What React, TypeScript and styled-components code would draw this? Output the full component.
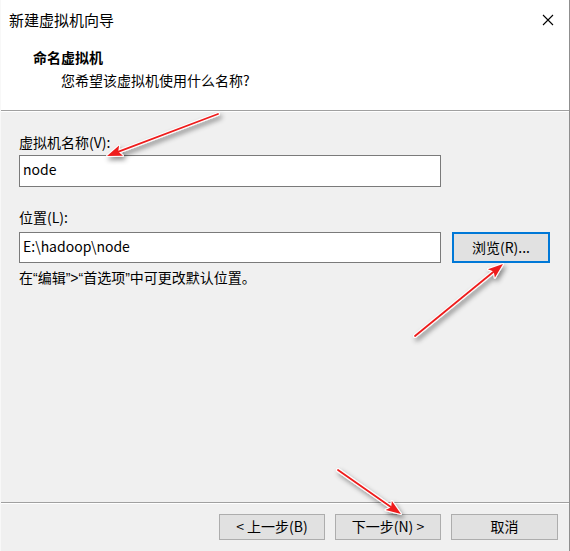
import styled, { createGlobalStyle } from "styled-components";

const GlobalStyle = createGlobalStyle`
  html, body {
    margin: 0;
    padding: 0;
    background: #f0f0f0;
  }
  body {
    font-family: "Noto Sans CJK SC", "Noto Sans", sans-serif;
    color: #000;
  }
  * {
    box-sizing: border-box;
  }
`;

interface IArrow {
  x1: number;
  y1: number;
  x2: number;
  y2: number;
}

const arrows: IArrow[] = [
  { x1: 218, y1: 114, x2: 107, y2: 156 },
  { x1: 415, y1: 336, x2: 503, y2: 264 },
  { x1: 338, y1: 470, x2: 401, y2: 514 },
];

// 화살표 모양 계산
const arrowShape = ({ x1, y1, x2, y2 }: IArrow) => {
  const len = Math.hypot(x2 - x1, y2 - y1);
  const ux = (x2 - x1) / len;
  const uy = (y2 - y1) / len;
  const head = 15;
  const half = 5.5;
  const bx = x2 - ux * head;
  const by = y2 - uy * head;
  const pts = [
    `${x2},${y2}`,
    `${bx - uy * half},${by + ux * half}`,
    `${bx + ux * 3},${by + uy * 3}`,
    `${bx + uy * half},${by - ux * half}`,
  ].join(" ");
  return { bx: bx + ux * 4, by: by + uy * 4, pts };
};

const App = () => {
  return (
    <>
      <GlobalStyle />
      <Window>
        <Header>
          <TitleBar>
            <WindowTitle>新建虚拟机向导</WindowTitle>
            <CloseBtn>
              <svg width="12" height="12" viewBox="0 0 12 12">
                <path d="M1 1 L11 11 M11 1 L1 11" stroke="#000" strokeWidth="1.1" />
              </svg>
            </CloseBtn>
          </TitleBar>
          <HeaderBody>
            <StepTitle>命名虚拟机</StepTitle>
            <StepDesc>您希望该虚拟机使用什么名称?</StepDesc>
          </HeaderBody>
        </Header>

        <Content>
          <Label>虚拟机名称(V):</Label>
          <TextBox $width={422} $height={32}>node</TextBox>
          <Label $top={20}>位置(L):</Label>
          <Row>
            <TextBox $width={422} $height={31}>E:\hadoop\node</TextBox>
            <Button $focused $width={98} $height={31}>
              浏览(R)...
            </Button>
          </Row>
          <Hint>
            在<Quote>“</Quote>编辑<Quote>”&gt;“</Quote>首选项<Quote>”</Quote>
            中可更改默认位置。
          </Hint>
        </Content>

        <Footer>
          <Button $width={106} $height={26}>&lt; 上一步(B)</Button>
          <Button $width={106} $height={26}>下一步(N) &gt;</Button>
          <Button $width={107} $height={26}>
            取消
          </Button>
        </Footer>

        <Overlay width="570" height="551" viewBox="0 0 570 551">
          <defs>
            <filter id="shadow" x="-20%" y="-20%" width="140%" height="140%">
              <feDropShadow dx="2" dy="3" stdDeviation="2.5" floodColor="#000" floodOpacity="0.45" />
            </filter>
          </defs>
          {arrows.map((a, i) => {
            const { bx, by, pts } = arrowShape(a);
            return (
              <g key={i} filter="url(#shadow)">
                <line x1={a.x1} y1={a.y1} x2={bx} y2={by} stroke="#fff" strokeWidth="4" strokeLinecap="round" />
                <polygon points={pts} fill="#fff" stroke="#fff" strokeWidth="2" strokeLinejoin="round" />
                <line x1={a.x1} y1={a.y1} x2={bx} y2={by} stroke="#ee1c1c" strokeWidth="1.8" strokeLinecap="round" />
                <polygon points={pts} fill="#ee1c1c" />
              </g>
            );
          })}
        </Overlay>
      </Window>
    </>
  );
};
export default App;

const Window = styled.div`
  position: relative;
  width: 570px;
  height: 551px;
  display: flex;
  flex-direction: column;
  background: #f0f0f0;
  border-left: 1px solid #f8f8f8;
  border-right: 1px solid #8f8f8f;
  overflow: hidden;
`;

const Header = styled.div`
  background: #fff;
  border-bottom: 1px solid #a0a0a0;
  box-shadow: 0 1px 0 #fff;
  height: 111px;
`;

const TitleBar = styled.div`
  height: 40px;
  display: flex;
  align-items: center;
  justify-content: space-between;
  padding-left: 8px;
  padding-right: 15px;
`;

const WindowTitle = styled.span`
  font-size: 15px;
  line-height: 20px;
  color: #000;
`;

const CloseBtn = styled.div`
  width: 12px;
  height: 12px;
  display: flex;
`;

const HeaderBody = styled.div`
  padding: 7px 0 0 32px;
  display: flex;
  flex-direction: column;
  gap: 3px;
`;

const StepTitle = styled.div`
  font-size: 14px;
  font-weight: 700;
  line-height: 20px;
`;

const StepDesc = styled.div`
  font-size: 14px;
  line-height: 20px;
  padding-left: 28px;
`;

const Content = styled.div`
  flex: 1;
  padding: 21px 0 0 18px;
  display: flex;
  flex-direction: column;
`;

const Label = styled.div<{ $top?: number }>`
  font-size: 14px;
  line-height: 20px;
  margin-top: ${({ $top }) => $top ?? 0}px;
  margin-bottom: 3px;
`;

const TextBox = styled.div<{ $width: number; $height: number }>`
  width: ${({ $width }) => $width}px;
  height: ${({ $height }) => $height}px;
  background: #fff;
  border: 1px solid #7a7a7a;
  font-size: 14px;
  display: flex;
  align-items: center;
  padding-left: 3px;
  padding-bottom: 4px;
`;

const Row = styled.div`
  display: flex;
  gap: 11px;
  margin-top: 2px;
`;

const Button = styled.div<{
  $width: number;
  $height: number;
  $focused?: boolean;
}>`
  width: ${({ $width }) => $width}px;
  height: ${({ $height }) => $height}px;
  background: #e1e1e1;
  border: ${({ $focused }) => ($focused ? "2px solid #0078d7" : "1px solid #adadad")};
  font-size: 14px;
  display: flex;
  align-items: center;
  justify-content: center;
  padding-bottom: 2px;
`;

const Hint = styled.div`
  font-size: 14px;
  line-height: 20px;
  margin-top: 4px;
`;

const Quote = styled.span`
  font-family: "Liberation Sans", sans-serif;
`;

const Footer = styled.div`
  height: 49px;
  border-top: 1px solid #a0a0a0;
  box-shadow: inset 0 1px 0 #fff;
  display: flex;
  justify-content: flex-end;
  align-items: flex-start;
  gap: 10px;
  padding: 11px 11px 0 0;
`;

const Overlay = styled.svg`
  position: absolute;
  left: -1px;
  top: 0;
  pointer-events: none;
`;
